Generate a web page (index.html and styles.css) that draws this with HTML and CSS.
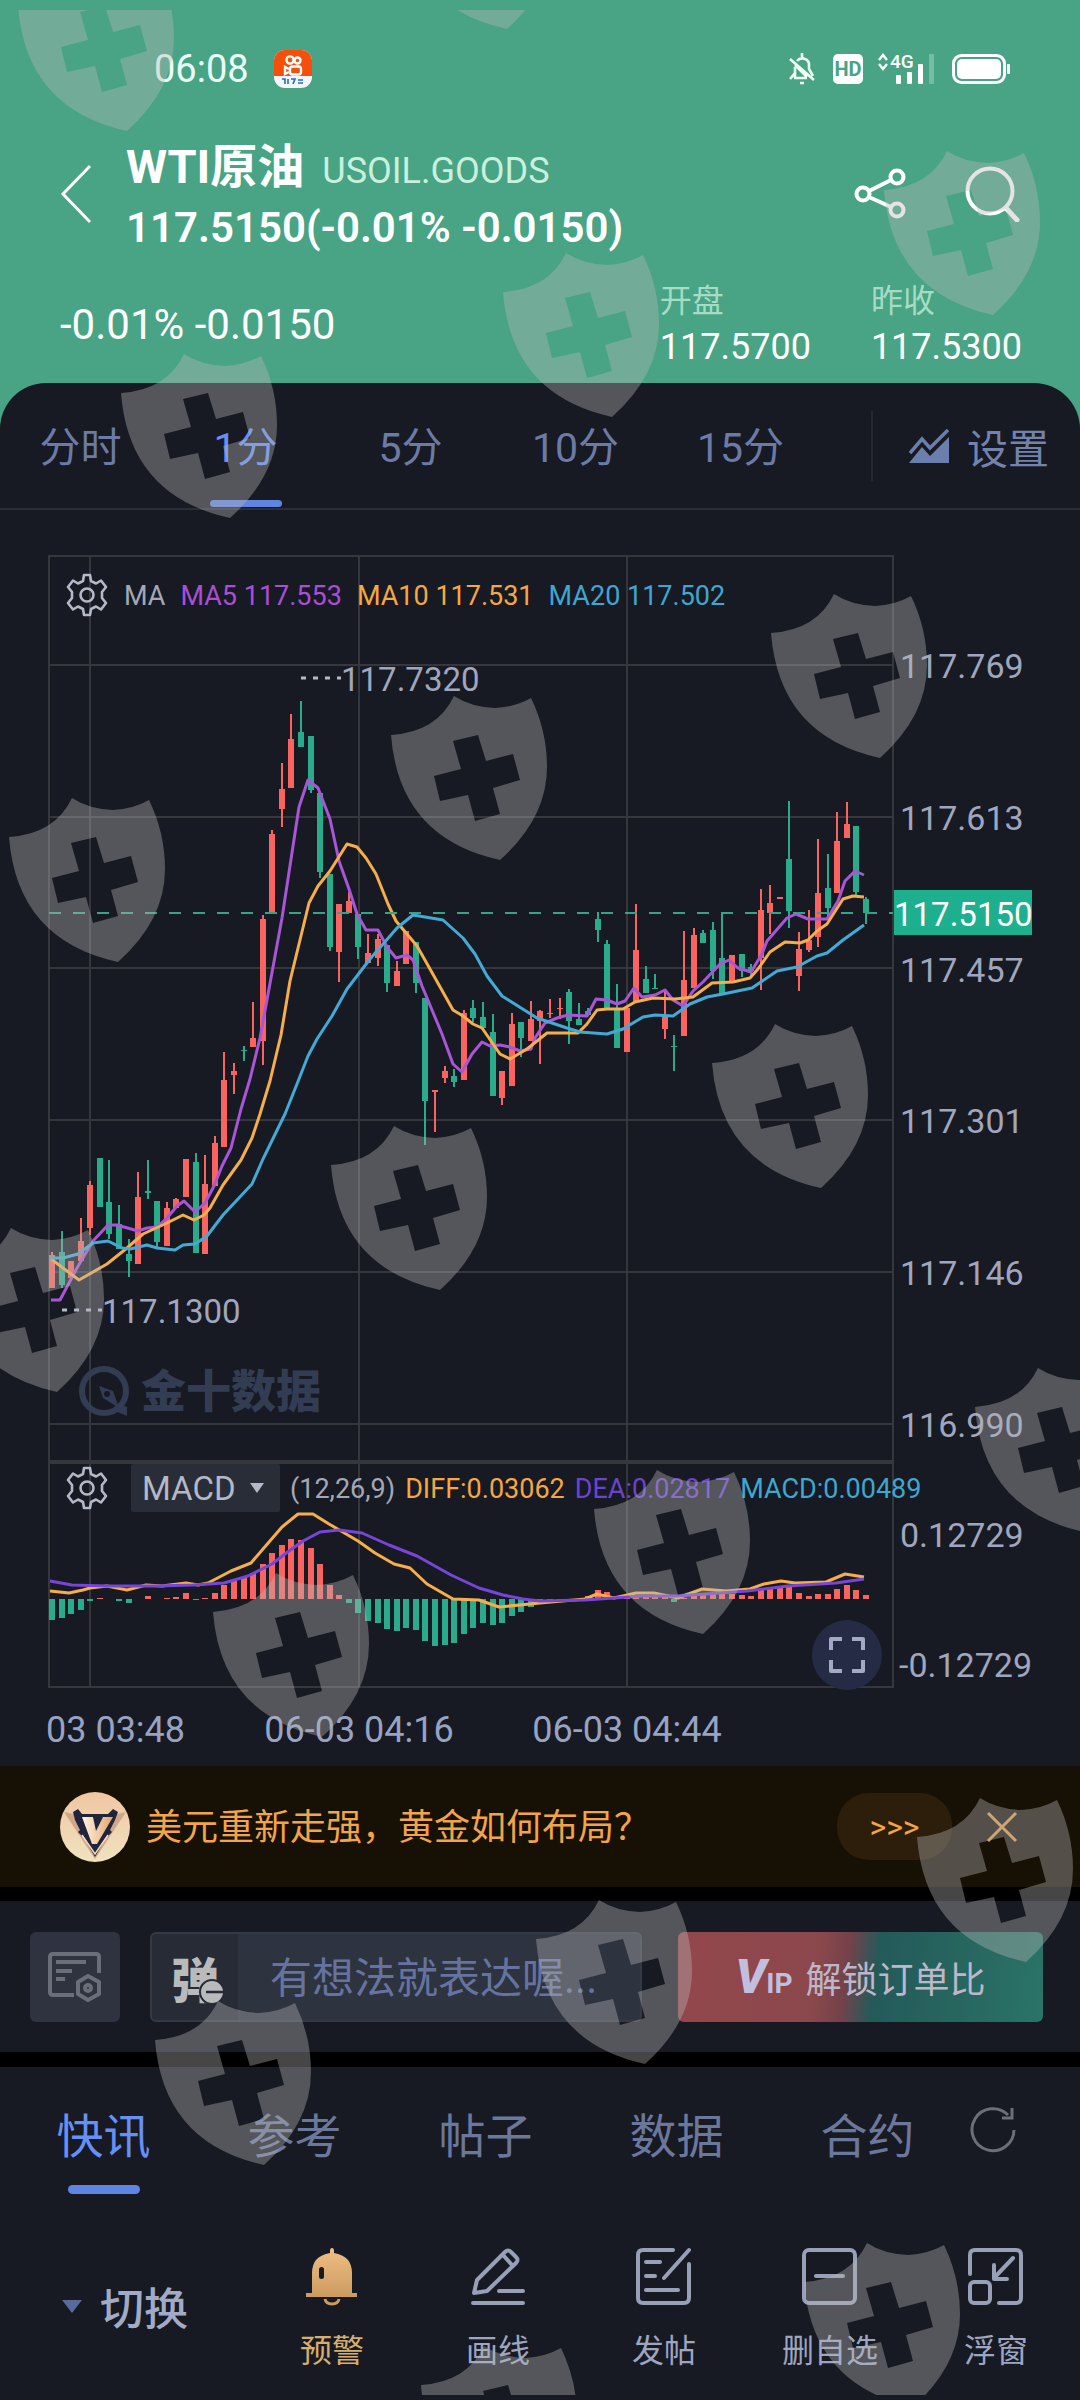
FILE: index.html
```html
<!DOCTYPE html>
<html lang="zh-CN">
<head>
<meta charset="utf-8">
<meta name="viewport" content="width=device-width, initial-scale=1">
<title>WTI原油 USOIL.GOODS</title>
<link rel="stylesheet" href="styles.css">
</head>
<body>
<div class="app">
  <div class="quote">
    <div class="status">
      <span class="clock">06:08</span>
      <svg class="app-icon" viewBox="0 0 38 38" aria-hidden="true">
        <rect width="38" height="38" rx="11" fill="#f4f8fc"/>
        <path d="M0 26V11A11 11 0 0 1 11 0H27A11 11 0 0 1 38 11V26Z" fill="#f4500c"/>
        <g fill="none" stroke="#fff" stroke-width="2.4"><circle cx="16" cy="10" r="3.6"/><circle cx="23.5" cy="10.5" r="3"/><rect x="16" y="16.5" width="11" height="8" rx="2.5"/><path d="M15 19L11 17V24L15 22"/></g>
        <path d="M8 29h3v5M14 29v5M17 29h4l-2 5M24 30h5M24 33h5" stroke="#2766d8" stroke-width="1.6" fill="none"/>
      </svg>
      <svg class="status-icons" viewBox="0 0 222 32" aria-hidden="true">
        <g fill="none" stroke="#effff8" stroke-width="2.6">
          <path d="M8 8A7 7 0 0 1 20 10V16L24 23M5 25H18M6 25V14M1 6L25 27M1 26L6 20M6 12L18 24"/>
          <path d="M13 0V4M11 30H15"/>
        </g>
        <rect x="44" y="1" width="30" height="30" rx="5" fill="#fff"/>
        <text x="59" y="23" text-anchor="middle" class="hd">HD</text>
        <path d="M90 7L94 2L98 7M90 11L94 16L98 11" fill="none" stroke="#fff" stroke-width="2.4"/>
        <text x="101" y="15" class="net">4G</text>
        <g fill="#fff"><rect x="107" y="22" width="5" height="9" rx="1"/><rect x="118" y="19" width="5" height="12" rx="1"/><rect x="129" y="11" width="5" height="20" rx="1"/><rect x="140" y="1" width="5" height="30" rx="1" opacity=".25"/></g>
        <rect x="164.500" y="2.500" width="51" height="27" rx="8" fill="none" stroke="#fff" stroke-width="3"/>
        <rect x="168" y="6" width="44" height="20" rx="5" fill="#fff"/>
        <rect x="218" y="11" width="3" height="10" rx="1" fill="#fff"/>
      </svg>
    </div>

    <header class="head">
      <button class="icon-btn back" aria-label="返回"><svg viewBox="0 0 32 60" width="32" height="60"><path d="M30 2L3 30L30 58" fill="none" stroke="#fff" stroke-width="3"/></svg></button>
      <div class="titles">
        <div class="title-line"><h1>WTI原油</h1><span class="code">USOIL.GOODS</span></div>
        <div class="price">117.5150(-0.01% -0.0150)</div>
      </div>
      <button class="icon-btn" aria-label="分享"><svg viewBox="0 0 52 52" width="52" height="52"><g fill="none" stroke="#fff" stroke-width="4"><circle cx="9" cy="26" r="6.500"/><circle cx="43" cy="9" r="6.500"/><circle cx="43" cy="42" r="6.500"/><path d="M15 23L37 12M15 29L37 39"/></g></svg></button>
      <button class="icon-btn" aria-label="搜索"><svg viewBox="0 0 56 56" width="56" height="56"><g fill="none" stroke="#fff" stroke-width="4"><circle cx="26" cy="25" r="22.500"/><path d="M42 42L53 54" stroke-width="5" stroke-linecap="round"/></g></svg></button>
    </header>

    <div class="stats">
      <div class="change">-0.01% -0.0150</div>
      <dl class="stat"><dt>开盘</dt><dd>117.5700</dd></dl>
      <dl class="stat"><dt>昨收</dt><dd>117.5300</dd></dl>
    </div>

    <main class="panel">
      <nav class="periods">
        <a href="#fs">分时</a><a href="#m1" class="on">1分</a><a href="#m5">5分</a><a href="#m10">10分</a><a href="#m15">15分</a>
        <button class="setup"><svg viewBox="0 0 40 34" width="40" height="34" aria-hidden="true"><path d="M0 34L13 18L21 27L40 8V34Z" fill="#6a7fab"/><path d="M1 24L13 10L21 19L39 1" fill="none" stroke="#6a7fab" stroke-width="3.500"/></svg>设置</button>
      </nav>

      <section class="chart" aria-label="K线图">
        <svg class="plot" viewBox="0 510 1080 1255">
          <g class="grid">
            <rect x="49" y="555" width="844" height="1131"/>
            <path d="M49 664H893M49 816H893M49 967H893M49 1119H893M49 1271H893M49 1423H893M90 555V1686M359 555V1686M627 555V1686"/>
            <path d="M49 1461H893" stroke-width="4"/>
          </g>
          <g fill="#323d54">
            <circle cx="104" cy="1390" r="22" fill="none" stroke="#323d54" stroke-width="6"/>
            <path d="M99 1385L113 1390L119 1407L103 1397Z"/><path d="M115 1402L127 1406V1415L115 1410Z"/>
            <circle cx="107" cy="1393" r="3" fill="#171a22"/>
            <text x="141" y="1407" class="brand">金十数据</text>
          </g>
          <g id="candles"></g>
          <g id="macd"></g>
          <g class="ma">
            <polyline stroke="#a855d6" points="51,1299 60,1299 77,1267 93,1240 108,1224 117,1224 138,1230 147,1227 157,1226 167,1217 177,1205 184,1200 195,1211 205,1202 214,1185 222,1165 231,1147 241,1108 250,1078 260,1037 282,917 299,806 308,779 318,787 330,818 339,860 349,888 357,913 366,929 378,929 387,946 396,957 407,954 413,959 422,985 442,1033 453,1063 462,1071 472,1053 482,1041 490,1045 500,1044 510,1046 520,1050 531,1048 535,1037 545,1022 557,1017 568,1014 587,1015 596,998 607,999 617,1003 625,1000 634,987 642,996 655,994 665,989 673,999 683,1005 693,990 703,981 720,963 729,959 738,967 751,971 762,953 767,940 787,917 796,913 808,918 827,918 838,900 845,880 855,870 864,874"/>
            <polyline stroke="#f5ae4b" points="51,1258 79,1279 107,1263 127,1247 143,1233 167,1222 183,1214 194,1219 204,1214 210,1207 223,1184 241,1159 252,1137 260,1113 270,1080 281,1034 290,980 309,902 318,885 330,870 347,843 357,846 366,857 376,873 388,903 396,920 417,945 430,968 453,1009 463,1015 473,1023 482,1027 500,1053 510,1058 527,1048 547,1032 578,1032 587,1023 597,1009 607,1008 623,1008 635,1001 653,997 675,998 693,996 712,982 733,981 750,977 758,968 770,951 785,941 800,942 808,939 817,930 827,923 843,898 853,895 864,896"/>
            <polyline stroke="#42aad4" points="50,1257 63,1257 78,1253 93,1242 108,1240 122,1247 130,1248 147,1244 157,1247 175,1249 183,1244 195,1243 207,1235 223,1214 238,1198 252,1183 263,1158 285,1113 297,1083 308,1055 317,1038 332,1015 347,988 370,958 397,927 413,914 443,919 463,937 475,953 487,975 502,995 537,1017 567,1027 580,1031 607,1033 623,1028 643,1016 655,1014 673,1015 690,1003 707,996 723,993 752,987 777,970 797,966 817,955 827,952 843,939 864,924"/>
            <polyline stroke="#f5ae4b" points="50,1590 69,1592 83,1589 90,1587 107,1585 127,1589 146,1584 162,1585 186,1582 198,1584 208,1582 231,1570 251,1562 263,1548 282,1526 298,1513 313,1513 329,1523 341,1530 358,1540 375,1552 394,1563 410,1567 427,1583 453,1598 479,1599 499,1606 540,1602 585,1598 597,1593 614,1597 636,1592 654,1592 678,1597 702,1588 726,1590 750,1588 764,1583 781,1580 795,1582 826,1581 845,1573 864,1576"/>
            <polyline stroke="#7745d8" points="50,1580 72,1584 107,1585 155,1585 193,1584 224,1582 248,1575 272,1563 289,1550 303,1540 320,1531 339,1529 362,1532 389,1544 417,1555 451,1574 479,1587 503,1594 523,1598 540,1600 585,1599 643,1595 678,1595 747,1590 788,1585 836,1582 864,1578"/>
          </g>
          <path d="M49 912H893" stroke="#35a387" stroke-width="2" stroke-dasharray="12 12"/>
          <g stroke="#b4b9ca" stroke-width="3" stroke-dasharray="5 7"><path d="M301 677H341M62 1309H102"/></g>
          <rect x="894" y="889" width="138" height="45" fill="#1eaf8f"/>
          <g class="axis">
            <text x="341" y="690" class="mark">117.7320</text><text x="102" y="1322" class="mark">117.1300</text>
            <text x="900" y="677">117.769</text><text x="900" y="829">117.613</text><text x="900" y="981">117.457</text><text x="900" y="1132">117.301</text><text x="900" y="1284">117.146</text><text x="900" y="1436">116.990</text>
            <text x="900" y="1546">0.12729</text><text x="899" y="1676">-0.12729</text>
            <text x="894" y="925" class="mark last">117.5150</text>
          </g>
          <g class="times"><text x="46" y="1741">03 03:48</text><text x="359" y="1741" text-anchor="middle">06-03 04:16</text><text x="627" y="1741" text-anchor="middle">06-03 04:44</text></g>
        </svg>

        <svg class="defs" aria-hidden="true"><symbol id="gear" viewBox="0 0 44 44"><g fill="none" stroke="#b4b9c9" stroke-width="2.600" stroke-linejoin="round"><path d="M19 2H25L26 8L31 10.500L36 7.500L41 14L37 19V25L41 30L36 36.500L31 33.500L26 36L25 42H19L18 36L13 33.500L8 36.500L3 30L7 25V19L3 14L8 7.500L13 10.500L18 8Z"/><circle cx="22" cy="22" r="6.500"/></g></symbol></svg>
        <div class="legend legend-ma">
          <button class="icon-btn" aria-label="均线设置"><svg width="44" height="44"><use href="#gear"/></svg></button>
          <span>MA</span><span class="c5">MA5 117.553</span><span class="c10">MA10 117.531</span><span class="c20">MA20 117.502</span>
        </div>
        <div class="legend legend-macd">
          <button class="icon-btn" aria-label="指标设置"><svg width="44" height="44"><use href="#gear"/></svg></button>
          <label class="indicator"><select aria-label="指标"><option>MACD</option></select></label>
          <span>(12,26,9)</span><span class="c10">DIFF:0.03062</span><span class="dea">DEA:0.02817</span><span class="c20">MACD:0.00489</span>
        </div>
        <button class="full" aria-label="全屏"><svg viewBox="0 0 36 36" width="36" height="36"><path d="M2 13V2H13M23 2H34V13M34 23V34H23M13 34H2V23" fill="none" stroke="#a3a9c4" stroke-width="4" stroke-linejoin="round"/></svg></button>
      </section>
    </main>
  </div>

  <aside class="promo">
    <svg viewBox="0 0 70 70" width="70" height="70" aria-hidden="true">
      <defs><linearGradient id="cream" x2="0" y2="1"><stop stop-color="#f0c6a2"/><stop offset="1" stop-color="#efe3c0"/></linearGradient><linearGradient id="gold"><stop stop-color="#fff4e2"/><stop offset="1" stop-color="#e2a56c"/></linearGradient></defs>
      <circle cx="35" cy="35" r="35" fill="url(#cream)"/>
      <path d="M4 20L18 23L35 63L53 23L66 20L35 67Z" fill="#d0a888"/>
      <path d="M13 20L18 17L22 22H48L53 17L58 20L55 28L50 38L52 40L46 46L35 65L24 46L18 40L20 38L15 28Z" fill="#20253c"/>
      <path d="M22 25H33L36 39L43 25H53L37 52H32Z" fill="url(#gold)"/>
      <path d="M22 43L35 62L48 43" fill="none" stroke="#f4dfc5" stroke-width="1.500"/>
    </svg>
    <a href="#promo" class="promo-text">美元重新走强，黄金如何布局？</a>
    <button class="more">&gt;&gt;&gt;</button>
    <button class="icon-btn" aria-label="关闭"><svg viewBox="0 0 32 32" width="32" height="32"><path d="M2 2L30 30M30 2L2 30" stroke="#d99c50" stroke-width="3"/></svg></button>
  </aside>

  <section class="chat">
    <button class="note" aria-label="设置"><svg viewBox="0 0 54 50" width="54" height="50"><g fill="none" stroke="#6a6e79" stroke-width="4" stroke-linejoin="round"><path d="M26 43H5Q2 43 2 40V5Q2 2 5 2H48Q51 2 51 5V21M8 10H38M8 19H24M8 27H17"/><path d="M40 24L51 30V42L40 48L30 42V30Z"/><circle cx="40" cy="36" r="3"/></g></svg></button>
    <div class="compose">
      <button class="danmu" aria-label="弹幕"><span>弹</span><svg viewBox="0 0 26 26" width="26" height="26" aria-hidden="true"><circle cx="13" cy="13" r="12" fill="#b9babb" stroke="#262b35" stroke-width="2"/><path d="M7 13H26" stroke="#262b35" stroke-width="2.500"/></svg></button>
      <input type="text" placeholder="有想法就表达喔..." aria-label="弹幕内容">
    </div>
    <button class="vip"><span class="vip-mark"><b>V</b>IP</span>解锁订单比</button>
  </section>

  <section class="bottom">
    <nav class="tabs">
      <a href="#news" class="on">快讯</a><a href="#ref">参考</a><a href="#posts">帖子</a><a href="#data">数据</a><a href="#contract">合约</a>
      <button class="icon-btn refresh" aria-label="刷新"><svg viewBox="0 0 46 48" width="46" height="48"><path d="M44 24A21 21 0 1 1 38 9M42 2V12H32" fill="none" stroke="#6b6f78" stroke-width="3"/></svg></button>
    </nav>
    <div class="tools">
      <button class="switch">切换</button>
      <button class="tool gold"><svg viewBox="0 0 58 60" width="58" height="60"><defs><linearGradient id="bell" x2="0" y2="1"><stop stop-color="#f0be84"/><stop offset="1" stop-color="#cb9b60"/></linearGradient></defs><path d="M27 4Q27 1 29 1T31 4V6Q49 9 49 26V46H54V50H3V46H9V26Q9 9 27 6Z" fill="url(#bell)"/><rect x="16" y="20" width="5" height="12" rx="2.500" fill="#171a22"/><path d="M22 52Q23 57 29 57T36 52" fill="none" stroke="#cb9b60" stroke-width="3"/></svg>预警</button>
      <button class="tool"><svg viewBox="0 0 58 60" width="58" height="60"><g class="ln"><path d="M5 46L8 33L36 5Q39 2 42 5L47 10Q50 13 47 16L18 44ZM34 8L43 18M30 44H54M4 56H54"/></g></svg>画线</button>
      <button class="tool"><svg viewBox="0 0 58 60" width="58" height="60"><g class="ln"><path d="M38 3H8Q3 3 3 8V51Q3 56 8 56H49Q54 56 54 51V17M54 3L29 31M11 15H25M11 29H20M11 43H43"/></g></svg>发帖</button>
      <button class="tool"><svg viewBox="0 0 58 60" width="58" height="60"><g class="ln"><rect x="3" y="3" width="51" height="53" rx="5"/><path d="M15 29H42"/></g></svg>删自选</button>
      <button class="tool"><svg viewBox="0 0 58 60" width="58" height="60"><g class="ln"><path d="M3 27V8Q3 3 8 3H49Q54 3 54 8V51Q54 56 49 56H32M46 11L27 31M27 18V32H40"/><rect x="3" y="35" width="20" height="21" rx="4"/></g></svg>浮窗</button>
    </div>
  </section>

  <svg class="shields" viewBox="0 0 1080 2400" aria-hidden="true">
    <defs>
      <path id="shield" fill-rule="evenodd" d="M63 0Q80 11 104 12Q124 11 140 2Q156 35 156 71Q156 122 109 164Q8 142 0 39Q46 36 63 0ZM62 45L70 73L43 80L49 105L77 99L84 125L109 118L102 92L129 84L122 58L95 65L87 39Z"/>
      <clipPath id="below"><path d="M0 10H1080V2400H0Z"/></clipPath>
    </defs>
    <g fill="#b9b7b7" fill-opacity=".38" clip-path="url(#below)">
      <use href="#shield" x="18" y="-33"/><use href="#shield" x="398" y="-135"/>
      <use href="#shield" x="121" y="354"/><use href="#shield" x="503" y="253"/><use href="#shield" x="884" y="151"/>
      <use href="#shield" x="9" y="798"/><use href="#shield" x="391" y="696"/><use href="#shield" x="771" y="594"/>
      <use href="#shield" x="-52" y="1228"/><use href="#shield" x="331" y="1126"/><use href="#shield" x="712" y="1024"/>
      <use href="#shield" x="213" y="1573"/><use href="#shield" x="594" y="1470"/><use href="#shield" x="975" y="1368"/>
      <use href="#shield" x="155" y="2001"/><use href="#shield" x="536" y="1900"/><use href="#shield" x="917" y="1798"/>
      <use href="#shield" x="421" y="2346"/><use href="#shield" x="804" y="2243"/>
    </g>
  </svg>
</div>
<script src="chart.js"></script>
</body>
</html>
```
FILE: styles.css
```css
* { box-sizing: border-box; }
body { margin: 0; background: #171a22; font-family: Roboto, "Noto Sans CJK SC", sans-serif; color: #fff; }
button { font: inherit; color: inherit; background: none; border: 0; padding: 0; }
a { color: inherit; text-decoration: none; }
svg { display: block; flex: none; }
h1, dl, dd { margin: 0; }
.app { position: relative; overflow: hidden; }
.icon-btn { display: flex; flex: none; }

.quote { background: #48a484; }
.status { display: flex; align-items: center; height: 90px; padding: 48px 69px 0 154px; }
.clock { font-size: 38px; line-height: 42px; color: #eafff6; }
.app-icon { width: 38px; height: 38px; margin-left: 25px; }
.status-icons { width: 222px; height: 32px; margin-left: auto; overflow: visible; }
.hd { font-size: 20px; font-weight: 700; fill: #48a484; }
.net { font-size: 19px; font-weight: 500; fill: #fff; }

.head { display: flex; align-items: center; gap: 58px; height: 206px; padding: 2px 60px 0; }
.back { margin-right: -24px; }
.titles { flex: 1; padding-top: 8px; }
.title-line { display: flex; align-items: baseline; gap: 18px; height: 60px; line-height: 60px; white-space: nowrap; }
h1 { font-size: 47px; font-weight: 700; line-height: 60px; }
.code { font-size: 36px; color: #c8f0df; }
.price { font-size: 42px; font-weight: 600; line-height: 62px; white-space: nowrap; }
.stats { display: flex; align-items: center; gap: 60px; height: 87px; padding: 0 58px 30px 60px; }
.change { flex: 1; font-size: 42px; line-height: 48px; }
.stat { font-size: 36px; line-height: 48px; }
.stat dt { font-size: 32px; line-height: 44px; color: #a5dcc6; }

.panel { background: #171a22; border-radius: 46px 46px 0 0; }
.periods { display: flex; align-items: center; height: 127px; border-bottom: 2px solid #2a2e36; color: #6b7ba6; font-size: 41px; }
.periods a { flex: 0 1 165px; height: 127px; line-height: 132px; text-align: center; position: relative; right: 2px; }
.periods .on, .tabs .on { color: #6690f5; }
.on::after { content: ""; position: absolute; left: 50%; bottom: 2px; width: 72px; margin-left: -36px; height: 7px; border-radius: 4px; background: #5f85e2; }
.setup { display: flex; align-items: center; justify-content: flex-end; flex: 1; gap: 18px; margin-left: 46px; padding-right: 31px; height: 70px; border-left: 2px solid #242832; color: #7383ac; }

.chart { position: relative; padding-top: 1px; }
.plot { width: 100%; height: auto; }
.defs { position: absolute; width: 0; height: 0; }
.grid { fill: none; stroke: #35373d; stroke-width: 2; }
.ma { fill: none; stroke-width: 3; stroke-linejoin: round; }
.brand { font-size: 45px; font-weight: 900; }
.axis { font-size: 34px; fill: #a0a6bd; }
.axis .mark { font-size: 33px; }
.axis .last { fill: #fff; }
.times { font-size: 36px; fill: #98a3c2; }
.up { fill: #fa6460; }
.down { fill: #2aab8c; }
.legend { position: absolute; left: 65px; display: flex; align-items: center; font-size: 27px; line-height: 44px; color: #a3a8b8; white-space: nowrap; }
.legend span { padding-top: 2px; }
.legend-ma { top: 62px; gap: 15px; }
.legend-macd { top: 954px; gap: 10px; }
.c5 { color: #a94fd6; }
.c10 { color: #f5a742; }
.c20 { color: #3fa7cf; }
.dea { color: #6c44cc; }
.indicator { position: relative; margin-left: 12px; }
.indicator select { appearance: none; display: block; width: 149px; height: 48px; border: 0; border-radius: 2px; padding: 0 0 0 11px; background: #282d38; color: #b4b8c8; font: 33px Roboto, sans-serif; }
.indicator::after { content: ""; position: absolute; right: 16px; top: 19px; border: 7px solid transparent; border-top: 10px solid #b4b8c8; border-bottom: 0; }
.full { position: absolute; right: 198px; bottom: 76px; display: grid; place-items: center; width: 70px; height: 70px; border-radius: 50%; background: #252b45; }

.promo { display: flex; align-items: center; height: 121px; padding: 0 62px 0 60px; background: #171004; color: #f2a548; }
.promo-text { flex: 1; padding: 3px 0 0 16px; font-size: 36px; line-height: 48px; white-space: nowrap; }
.more { width: 115px; height: 67px; margin-right: 34px; border-radius: 32px; background: #2d1e0b; color: #f5a640; font-size: 32px; }

.chat { display: flex; align-items: center; height: 180px; padding: 0 37px 0 30px; border: solid #000; border-width: 14px 0 15px; }
.note { display: grid; place-items: center; width: 90px; height: 90px; border-radius: 6px; background: #2e333f; }
.compose { flex: 1; display: flex; min-width: 0; margin: 0 36px 0 30px; height: 90px; border: 2px solid #333945; border-radius: 6px; background: #2e3340; overflow: hidden; }
.danmu { display: flex; justify-content: center; align-items: center; flex: none; width: 86px; position: relative; background: #262b35; color: #b9babb; font-size: 48px; font-weight: 900; }
.danmu svg { position: absolute; right: 13px; bottom: 15px; }
.compose input { flex: 1; min-width: 0; border: 0; padding: 4px 0 0 32px; background: none; outline: 0; color: #dfe3f0; font: 42px Roboto, "Noto Sans CJK SC", sans-serif; }
.compose input::placeholder { color: #6673a0; opacity: 1; }
.vip { display: flex; align-items: center; justify-content: center; gap: 13px; width: 365px; height: 90px; border-radius: 6px; color: #bdb7c9; font-size: 36px; background: linear-gradient(98deg, #93474c 0%, #8b484c 38%, #74424a 46%, #235a5a 54%, #27655f 75%, #2a7468 100%); }
.vip-mark { display: flex; align-items: baseline; font-size: 28px; font-weight: 700; color: #c2bfdc; }
.vip-mark b { font-size: 48px; font-style: italic; line-height: 48px; }

.bottom { padding-bottom: 24px; }
.tabs { display: flex; align-items: center; height: 136px; padding: 0 60px 0 8px; color: #6b779b; font-size: 47px; }
.tabs a { position: relative; flex: 0 1 191px; height: 136px; line-height: 140px; text-align: center; white-space: nowrap; }
.tabs .on::after { height: 9px; bottom: 9px; border-radius: 5px; }
.refresh { margin: 0 4px 10px auto; }
.tools { display: flex; align-items: flex-start; padding: 44px 1px 0 62px; color: #9da6c0; }
.switch { flex: 1; display: flex; align-items: center; gap: 18px; height: 118px; font-size: 44px; font-weight: 500; color: #a2abc6; }
.switch::before { content: ""; border: 10px solid transparent; border-top: 13px solid #5a6a9c; border-bottom: 0; }
.tool { flex: 0 1 166px; display: flex; flex-direction: column; align-items: center; gap: 24px; font-size: 32px; line-height: 40px; white-space: nowrap; }
.gold { color: #d9ad6e; }
.ln { fill: none; stroke: #98a0b8; stroke-width: 4; stroke-linecap: round; stroke-linejoin: round; }

.shields { position: absolute; left: 0; top: 0; width: 100%; height: auto; pointer-events: none; }
```
FILE: chart.js
```js
// Candles: [direction, wick top, body top, body bottom, wick bottom]; 1 = up, 0 = down
const candles = [
  [1,1251,1254,1287,1287],[0,1230,1251,1284,1287],[1,1260,1260,1277,1277],[1,1217,1240,1260,1260],[1,1180,1184,1227,1234],
  [0,1157,1157,1206,1206],[0,1159,1201,1233,1238],[0,1204,1223,1248,1248],[0,1238,1253,1260,1276],[1,1171,1196,1263,1263],
  [0,1159,1190,1192,1198],[0,1200,1200,1241,1248],[1,1201,1207,1245,1245],[1,1197,1198,1207,1207],[1,1158,1158,1196,1196],
  [0,1152,1161,1252,1252],[1,1154,1183,1253,1253],[1,1135,1142,1185,1185],[1,1051,1079,1146,1146],[1,1062,1070,1074,1093],
  [0,1045,1049,1050,1060],[1,1001,1037,1046,1046],[1,914,918,1040,1064],[1,829,833,912,912],[1,762,788,808,826],
  [1,713,738,787,787],[0,700,731,746,746],[0,735,735,789,792],[0,792,792,871,877],[0,873,873,946,950],
  [1,903,903,951,981],[1,891,900,912,912],[0,913,913,946,958],[1,933,952,962,962],[1,933,938,957,965],
  [0,944,944,982,991],[1,960,970,985,985],[1,930,930,963,963],[0,941,941,982,992],[0,997,997,1100,1144],
  [1,1089,1089,1091,1131],[1,1065,1070,1077,1082],[0,1068,1075,1081,1086],[1,1009,1012,1079,1079],[0,999,1007,1017,1021],
  [0,1001,1016,1027,1027],[0,1013,1031,1095,1095],[1,1070,1070,1097,1104],[1,1012,1023,1085,1085],[0,1021,1021,1037,1056],
  [1,1000,1018,1040,1040],[1,1009,1010,1020,1063],[1,998,1012,1013,1017],[1,997,1007,1008,1018],[0,988,991,1020,1043],
  [0,1002,1018,1024,1024],[0,1007,1010,1014,1014],[0,911,918,929,941],[0,939,943,1008,1008],[0,983,1008,1047,1047],
  [1,1007,1007,1051,1051],[1,903,949,1001,1001],[0,965,978,992,992],[0,973,987,988,988],[1,990,1015,1028,1038],
  [0,1034,1045,1046,1070],[1,930,979,1035,1035],[1,927,934,987,987],[0,929,932,942,942],[0,921,929,970,978],
  [0,911,957,994,994],[1,954,954,980,980],[0,953,953,970,976],[0,963,966,970,976],[1,888,909,957,989],
  [1,884,902,912,933],[1,896,896,898,898],[0,800,858,910,927],[1,931,948,975,990],[1,909,939,949,951],
  [1,838,892,936,946],[0,853,887,907,917],[1,811,840,892,892],[1,801,823,837,837],[0,825,825,891,894],[0,896,898,912,923]
];
// MACD histogram heights; positive = above the zero line
const bars = [-21,-19,-15,-11,-2,1,0,-2,-4,0,3,0,1,2,6,-1,1,6,14,18,22,26,35,46,54,60,59,51,35,14,4,-4,-14,-22,-24,-30,-32,-29,-31,-42,-47,-46,-44,-35,-29,-24,-26,-24,-17,-13,-8,-3,-2,-1,0,0,3,9,7,3,3,4,3,3,2,-3,1,5,6,6,5,5,4,3,9,10,13,14,6,3,5,5,10,14,9,4];

const step = 814 / 85;
const firstX = 52;
const zeroY = 1598;
const ns = "http://www.w3.org/2000/svg";

function rect(parent, cls, x, y, width, height) {
  const el = document.createElementNS(ns, "rect");
  for (const [k, v] of Object.entries({ class: cls, x, y, width, height })) el.setAttribute(k, v);
  parent.appendChild(el);
}

const candleLayer = document.getElementById("candles");
candles.forEach(([up, high, top, bottom, low], i) => {
  const x = Math.round(firstX + i * step);
  const cls = up ? "up" : "down";
  rect(candleLayer, cls, x - 1, high, 2, low - high);
  rect(candleLayer, cls, x - 3, top, 6, Math.max(bottom - top, 1));
});

const macdLayer = document.getElementById("macd");
bars.forEach((v, i) => {
  if (!v) return;
  const x = Math.round(firstX + i * step) - 3;
  rect(macdLayer, v > 0 ? "up" : "down", x, v > 0 ? zeroY - v : zeroY, 6, Math.abs(v));
});
```
